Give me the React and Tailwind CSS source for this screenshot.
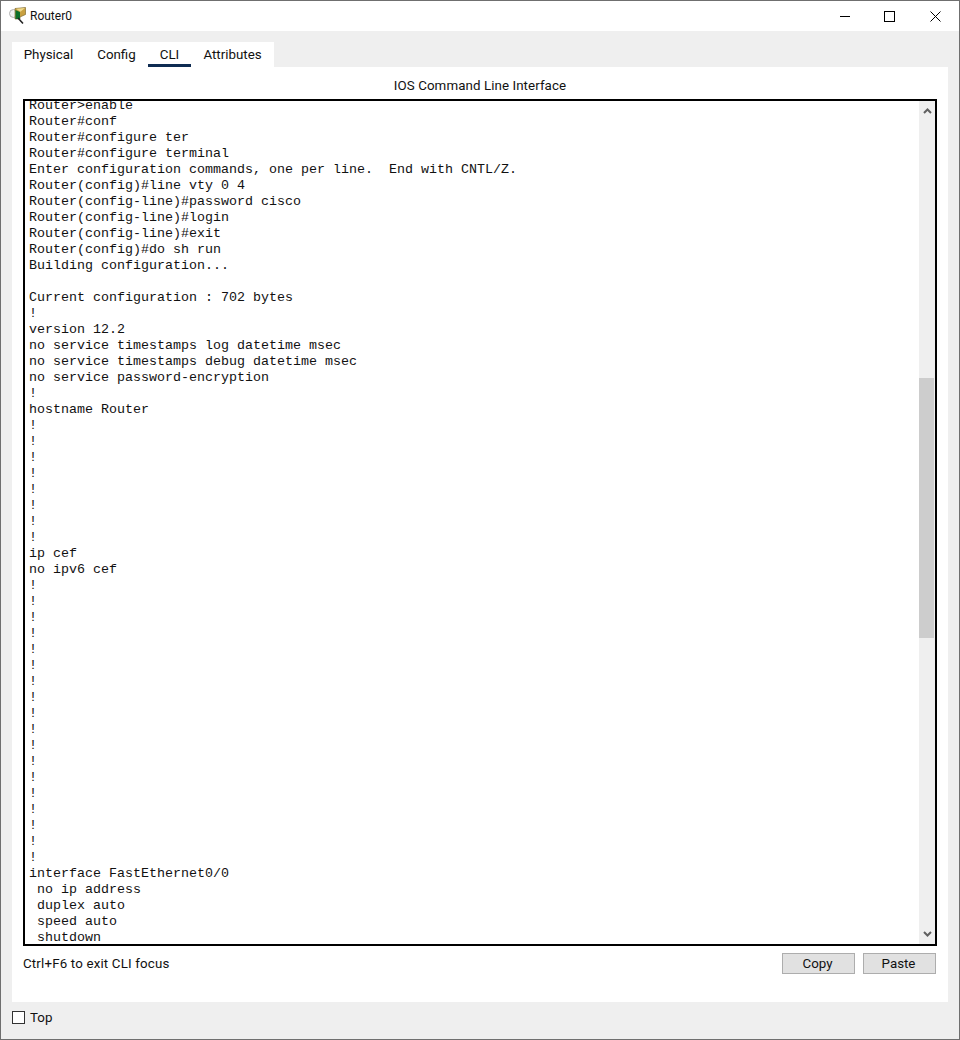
import React from "react";

const bangs = (n) => Array(n).fill("!");

const cliLines = [
  "Router>enable",
  "Router#conf",
  "Router#configure ter",
  "Router#configure terminal",
  "Enter configuration commands, one per line.  End with CNTL/Z.",
  "Router(config)#line vty 0 4",
  "Router(config-line)#password cisco",
  "Router(config-line)#login",
  "Router(config-line)#exit",
  "Router(config)#do sh run",
  "Building configuration...",
  "",
  "Current configuration : 702 bytes",
  "!",
  "version 12.2",
  "no service timestamps log datetime msec",
  "no service timestamps debug datetime msec",
  "no service password-encryption",
  "!",
  "hostname Router",
  ...bangs(8),
  "ip cef",
  "no ipv6 cef",
  ...bangs(18),
  "interface FastEthernet0/0",
  " no ip address",
  " duplex auto",
  " speed auto",
  " shutdown",
];

const tabs = [
  { label: "Physical", cls: "w-[73px]" },
  { label: "Config", cls: "w-[63px]" },
  { label: "CLI", cls: "w-[43px]", active: true },
  { label: "Attributes", cls: "w-[83px]" },
];

const RouterIcon = () => (
  <svg width="17" height="18" viewBox="0 0 17 18">
    <circle cx="4.5" cy="6.5" r="4" fill="#f2f2f2" stroke="#b0b0b0" strokeWidth="1" />
    <path d="M6 1.5L16.5 0.5V7.5L11 10V12H6Z" fill="#c8a040" stroke="#6f5a20" strokeWidth="0.6" />
    <path d="M6.5 3L11 5V12H6.5Z" fill="#0b6f2a" />
    <path d="M7 1.8L16 1L11.5 4.8Z" fill="#eed98c" />
    <path d="M9 11L14 16.5" stroke="#222" strokeWidth="1.6" />
  </svg>
);

const App = () => {
  return (
    <div className="w-[960px] h-[1040px] flex flex-col bg-[#efefef] border border-[#6f6f6f] overflow-hidden font-['Roboto',sans-serif] text-[13.33px] text-[#111]">
      {/* Title bar */}
      <div className="h-[30px] bg-white flex items-center shrink-0 text-[12px]">
        <div className="ml-[8px] mr-[4px] flex"><RouterIcon /></div>
        <span>Router0</span>
        <div className="ml-auto flex items-center">
          <div className="w-[45px] h-[30px] flex items-center justify-center">
            <div className="w-[10px] h-px bg-black" />
          </div>
          <div className="w-[45px] h-[30px] flex items-center justify-center">
            <div className="w-[11px] h-[11px] border border-black" />
          </div>
          <div className="w-[46px] h-[30px] flex items-center justify-center mr-[1px]">
            <svg width="11" height="11" viewBox="0 0 11 11">
              <path d="M0.5 0.5L10.5 10.5M10.5 0.5L0.5 10.5" stroke="#000" strokeWidth="1" />
            </svg>
          </div>
        </div>
      </div>

      {/* Tabs */}
      <div className="mt-[11px] ml-[11px] flex w-max h-[25px] bg-white shrink-0">
        {tabs.map((t) => (
          <div key={t.label} className={`${t.cls} h-full flex justify-center pt-[4px] leading-[18px] ${t.active ? "border-b-[3px] border-[#0f2c52]" : ""}`}>
            {t.label}
          </div>
        ))}
      </div>

      {/* Panel */}
      <div className="mx-[11px] w-[936px] h-[935px] bg-white flex flex-col shrink-0 px-[11px]">
        <div className="h-[32px] flex items-center justify-center shrink-0 pt-[5px] tracking-[0.08px]">IOS Command Line Interface</div>
        <div className="w-[914px] h-[847px] border-2 border-black flex overflow-hidden shrink-0">
          <div className="flex-1 overflow-hidden pl-[4px]">
            <pre className="font-['Liberation_Mono',monospace] text-[13.33px] leading-[16px] text-[#111] -mt-[3px]">
              {cliLines.map((line, i) => (
                <div key={i} className="h-[16px]">{line}</div>
              ))}
            </pre>
          </div>
          <div className="w-[16px] bg-[#efefef] flex flex-col items-center shrink-0 relative">
            <svg className="mt-[7px]" width="9" height="6" viewBox="0 0 9 6">
              <path d="M1 5L4.5 1.5L8 5" fill="none" stroke="#606060" strokeWidth="2" />
            </svg>
            <div className="absolute top-[277px] left-0 w-[15px] h-[260px] bg-[#cdcdcd]" />
            <svg className="mt-auto mb-[7px]" width="9" height="6" viewBox="0 0 9 6">
              <path d="M1 1L4.5 4.5L8 1" fill="none" stroke="#606060" strokeWidth="2" />
            </svg>
          </div>
        </div>
        <div className="mt-[7px] flex items-center justify-between w-[913px]">
          <span className="tracking-[0.16px]">Ctrl+F6 to exit CLI focus</span>
          <div className="flex gap-[8px]">
            <button className="w-[73px] h-[21px] bg-[#e1e1e1] border border-[#adadad] leading-none pr-[2px]">Copy</button>
            <button className="w-[73px] h-[21px] bg-[#e1e1e1] border border-[#adadad] leading-none pr-[2px]">Paste</button>
          </div>
        </div>
      </div>

      {/* Bottom */}
      <div className="mt-[7px] ml-[11px] flex items-center gap-[5px] h-[17px]">
        <div className="w-[13px] h-[13px] border border-[#333] bg-white" />
        <span>Top</span>
      </div>
    </div>
  );
};

export default App;
